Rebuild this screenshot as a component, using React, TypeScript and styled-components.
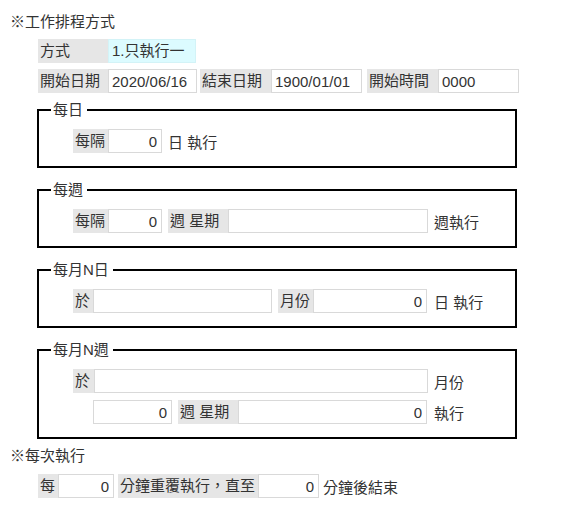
import React from 'react';
import styled, { createGlobalStyle } from 'styled-components';

const GlobalStyle = createGlobalStyle`
  body {
    margin: 0;
    background: #fff;
    color: #333;
    font-family: 'Liberation Sans', 'Noto Sans CJK TC', sans-serif;
    font-size: 15px;
  }
`;

const Page = styled.div`
  padding: 12px 0 16px 10px;
`;

const SectionTitle = styled.div<{ $mt?: number }>`
  line-height: 20px;
  margin-top: ${p => p.$mt ?? 0}px;
`;

const Block = styled.div<{ $mt: number }>`
  display: flex;
  flex-direction: column;
  gap: 6px;
  margin-left: 28px;
  margin-top: ${p => p.$mt}px;
`;

const Row = styled.div<{ $indent?: number }>`
  display: flex;
  align-items: center;
  height: 24px;
  padding-left: ${p => p.$indent ?? 0}px;
`;

const Label = styled.span<{ $w: number; $ml?: number }>`
  box-sizing: border-box;
  width: ${p => p.$w}px;
  height: 24px;
  line-height: 24px;
  padding: 0 2px;
  margin-left: ${p => p.$ml ?? 0}px;
  background: #e6e6e6;
  white-space: nowrap;
  overflow: hidden;
`;

const Field = styled.input<{ $w: number; $ml?: number; $right?: boolean; $tint?: boolean }>`
  box-sizing: border-box;
  width: ${p => p.$w}px;
  height: 24px;
  margin: 0 0 0 ${p => p.$ml ?? 0}px;
  padding: ${p => (p.$tint ? '0 3px 3px 3px' : '0 4px 0 3px')};
  border: 1px solid ${p => (p.$tint ? '#d3f3f7' : '#d9d9d9')};
  background: ${p => (p.$tint ? '#dcfbff' : '#fff')};
  color: #333;
  font: inherit;
  text-align: ${p => (p.$right ? 'right' : 'left')};
  outline: none;
`;

const Trail = styled.span<{ $ml?: number }>`
  margin-left: ${p => p.$ml ?? 6}px;
  white-space: nowrap;
`;

const Frame = styled.fieldset<{ $mt: number }>`
  box-sizing: border-box;
  width: 480px;
  margin: ${p => p.$mt}px 0 0 27px;
  padding: 9px 0 13px 12px;
  border: 2px solid #000;
  min-inline-size: 0;
`;

const Legend = styled.legend`
  padding: 0 4px 0 2px;
  margin: 0;
  line-height: 20px;
  font-size: 15px;
  color: #333;
`;

const FrameBody = styled.div`
  display: flex;
  flex-direction: column;
  gap: 7px;
  padding-left: 22px;
`;

export default function App() {
  return (
    <Page>
      <GlobalStyle />
      <SectionTitle>※工作排程方式</SectionTitle>
      <Block $mt={7}>
        <Row>
          <Label $w={70}>方式</Label>
          <Field $w={88} $tint readOnly defaultValue="1.只執行一" />
        </Row>
        <Row>
          <Label $w={70}>開始日期</Label>
          <Field $w={89} readOnly defaultValue="2020/06/16" />
          <Label $w={71} $ml={3}>結束日期</Label>
          <Field $w={91} readOnly defaultValue="1900/01/01" />
          <Label $w={71} $ml={5}>開始時間</Label>
          <Field $w={81} readOnly defaultValue="0000" />
        </Row>
      </Block>

      <Frame $mt={7}>
        <Legend>每日</Legend>
        <FrameBody>
          <Row>
            <Label $w={35}>每隔</Label>
            <Field $w={54} $right readOnly defaultValue="0" />
            <Trail>日 執行</Trail>
          </Row>
        </FrameBody>
      </Frame>

      <Frame $mt={12}>
        <Legend>每週</Legend>
        <FrameBody>
          <Row>
            <Label $w={35}>每隔</Label>
            <Field $w={54} $right readOnly defaultValue="0" />
            <Label $w={60} $ml={6}>週 星期</Label>
            <Field $w={200} readOnly defaultValue="" />
            <Trail>週執行</Trail>
          </Row>
        </FrameBody>
      </Frame>

      <Frame $mt={12}>
        <Legend>每月N日</Legend>
        <FrameBody>
          <Row>
            <Label $w={20}>於</Label>
            <Field $w={179} readOnly defaultValue="" />
            <Label $w={35} $ml={6}>月份</Label>
            <Field $w={114} $right readOnly defaultValue="0" />
            <Trail $ml={7}>日 執行</Trail>
          </Row>
        </FrameBody>
      </Frame>

      <Frame $mt={12}>
        <Legend>每月N週</Legend>
        <FrameBody>
          <Row>
            <Label $w={21}>於</Label>
            <Field $w={334} readOnly defaultValue="" />
            <Trail>月份</Trail>
          </Row>
          <Row $indent={20}>
            <Field $w={79} $right readOnly defaultValue="0" />
            <Label $w={60} $ml={6}>週 星期</Label>
            <Field $w={189} $right readOnly defaultValue="0" />
            <Trail $ml={7}>執行</Trail>
          </Row>
        </FrameBody>
      </Frame>

      <SectionTitle $mt={7}>※每次執行</SectionTitle>
      <Block $mt={8}>
        <Row>
          <Label $w={20}>每</Label>
          <Field $w={56} $right readOnly defaultValue="0" />
          <Label $w={140} $ml={4}>分鐘重覆執行，直至</Label>
          <Field $w={61} $right readOnly defaultValue="0" />
          <Trail $ml={4}>分鐘後結束</Trail>
        </Row>
      </Block>
    </Page>
  );
}
